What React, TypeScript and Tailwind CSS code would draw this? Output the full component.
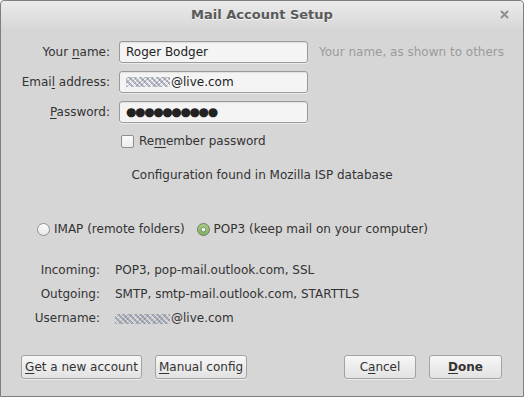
import React from "react";

const U = ({ children }: { children: React.ReactNode }) => (
  <span className="underline underline-offset-[2px] decoration-[1px]">{children}</span>
);

const Mask = ({ w }: { w: number }) => (
  <span
    className="inline-block h-[10px] align-middle mr-[1px]"
    style={{
      width: w,
      backgroundImage:
        "repeating-linear-gradient(45deg, rgba(120,140,170,0.55) 0 2px, rgba(240,240,240,0.2) 2px 4px), repeating-linear-gradient(-45deg, rgba(150,120,110,0.45) 0 1px, rgba(255,255,255,0) 1px 3px)",
      filter: "blur(0.6px)",
    }}
  />
);

const inputCls =
  "h-[22px] w-[189px] rounded-[3px] border border-[#9a9a9a] bg-[#f4f4f4] shadow-[0_1px_0_#ececec,inset_0_1px_1px_rgba(0,0,0,0.08)] flex items-center px-[6px] text-[#222]";

const btnCls =
  "h-[24px] rounded-[3px] border border-[#a3a3a3] bg-gradient-to-b from-[#f7f7f7] to-[#e2e2e2] shadow-[0_1px_0_rgba(255,255,255,0.5)] flex items-center justify-center text-[#333]";

export default function App() {
  return (
    <div
      className="w-[524px] h-[397px] overflow-hidden"
      style={{ fontFamily: '"DejaVu Sans", sans-serif' }}
    >
      <div className="w-[524px] h-[397px] border border-[#7f7f7f] rounded-t-[4px] bg-[#d6d6d6] text-[12px] leading-[15px] text-[#333] flex flex-col">
        {/* title bar */}
        <div className="relative h-[27px] shrink-0 flex items-center justify-center bg-gradient-to-b from-[#ebebeb] to-[#d8d8d8] rounded-t-[4px]">
          <span className="text-[13px] font-bold text-[#5a5a5a] [text-shadow:0_1px_0_rgba(255,255,255,0.7)]">
            Mail Account Setup
          </span>
          <svg className="absolute right-[14px] top-[9px]" width="9" height="9" viewBox="0 0 9 9">
            <path d="M1.5 1.5 L7.5 7.5 M7.5 1.5 L1.5 7.5" stroke="#8d8d8d" strokeWidth="2" strokeLinecap="round" />
          </svg>
        </div>

        {/* form */}
        <div className="mt-[13px] grid grid-cols-[109px_189px_1fr] gap-x-[9px] gap-y-[8px] items-center">
          <div className="text-right">
            Your <U>n</U>ame:
          </div>
          <div className={inputCls}>Roger Bodger</div>
          <div className="pl-[2px] text-[#9b9b9b]">Your name, as shown to others</div>

          <div className="text-right">
            Emai<U>l</U> address:
          </div>
          <div className={inputCls}>
            <Mask w={44} />
            @live.com
          </div>
          <div />

          <div className="text-right">
            <U>P</U>assword:
          </div>
          <div className={inputCls + " text-[#111] text-[12px] tracking-[-1.4px]"}>●●●●●●●●●●</div>
          <div />
        </div>

        <div className="mt-[11px] ml-[120px] flex items-center h-[14px]">
          <div className="w-[13px] h-[13px] rounded-[2px] border border-[#8f8f8f] bg-gradient-to-b from-[#fbfbfb] to-[#ececec]" />
          <span className="ml-[5px]">
            Re<U>m</U>ember password
          </span>
        </div>

        <div className="mt-[20px] text-center">Configuration found in Mozilla ISP database</div>

        {/* radios */}
        <div className="mt-[39px] ml-[36px] flex items-center">
          <svg width="13" height="13" viewBox="0 0 13 13">
            <defs>
              <linearGradient id="rg" x1="0" y1="0" x2="0" y2="1">
                <stop offset="0" stopColor="#fdfdfd" />
                <stop offset="1" stopColor="#e6e6e6" />
              </linearGradient>
            </defs>
            <circle cx="6.5" cy="6.5" r="6" fill="url(#rg)" stroke="#8f8f8f" strokeWidth="1" />
          </svg>
          <span className="ml-[4px]">IMAP (remote folders)</span>
          <svg className="ml-[12px]" width="13" height="13" viewBox="0 0 13 13">
            <defs>
              <linearGradient id="gg" x1="0" y1="0" x2="0" y2="1">
                <stop offset="0" stopColor="#a8cf8c" />
                <stop offset="1" stopColor="#7fae62" />
              </linearGradient>
            </defs>
            <circle cx="6.5" cy="6.5" r="6" fill="url(#gg)" stroke="#6e7f66" strokeWidth="1" />
            <circle cx="6.5" cy="6.5" r="2.4" fill="#eef5e8" stroke="#5f7f4e" strokeWidth="0.8" />
          </svg>
          <span className="ml-[4px]">POP3 (keep mail on your computer)</span>
        </div>

        {/* info */}
        <div className="mt-[26px] grid grid-cols-[99px_1fr] gap-x-[15px] gap-y-[9px]">
          <div className="text-right">Incoming:</div>
          <div>POP3, pop-mail.outlook.com, SSL</div>
          <div className="text-right">Outgoing:</div>
          <div>SMTP, smtp-mail.outlook.com, STARTTLS</div>
          <div className="text-right">Username:</div>
          <div>
            <Mask w={55} />
            @live.com
          </div>
        </div>

        {/* buttons */}
        <div className="mt-[29px] pl-[20px] pr-[21px] flex items-center">
          <div className={btnCls + " w-[121px]"}>
            <span>
              <U>G</U>et a new account
            </span>
          </div>
          <div className={btnCls + " w-[92px] ml-[13px]"}>
            <span>
              <U>M</U>anual config
            </span>
          </div>
          <div className="flex-1" />
          <div className={btnCls + " w-[72px]"}>
            <span>
              C<U>a</U>ncel
            </span>
          </div>
          <div className={btnCls + " w-[73px] ml-[13px] font-bold"}>
            <span>
              <U>D</U>one
            </span>
          </div>
        </div>
      </div>
    </div>
  );
}
